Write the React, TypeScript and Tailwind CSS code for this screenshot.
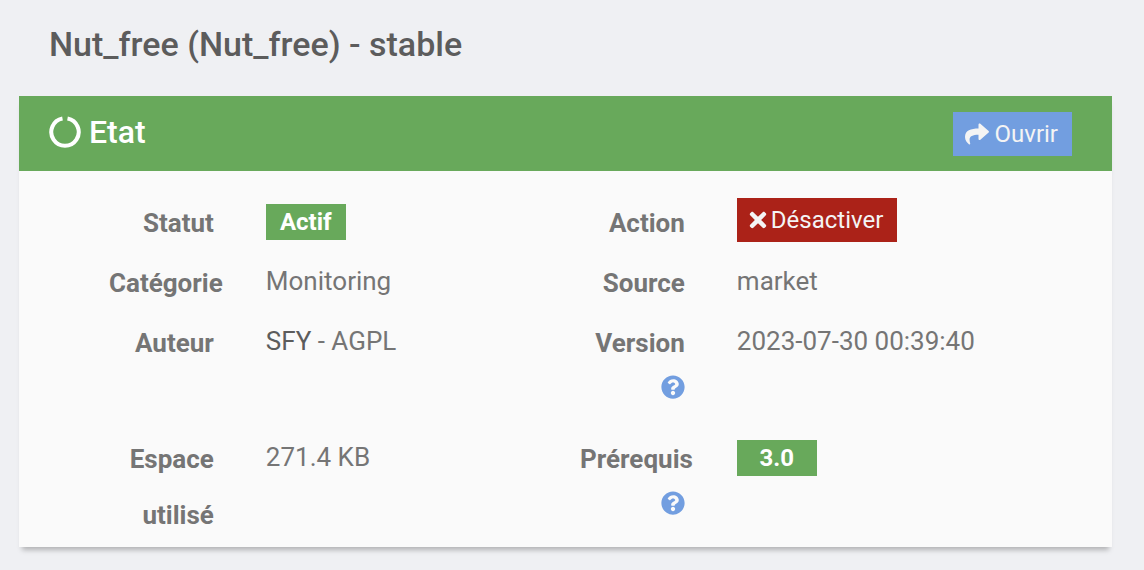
import type { ReactNode } from "react";
import { FaQuestionCircle, FaShare, FaTimes } from "react-icons/fa";

function StateIcon() {
  return (
    <svg viewBox="0 0 32 32" className="size-8" fill="none" stroke="currentColor" strokeWidth="4" strokeLinejoin="round" aria-hidden="true">
      <path d="M13.5 2.5A13.7 13.7 0 1 0 18.5 2.5" />
    </svg>
  );
}

function Label({ children, help }: { children: ReactNode; help?: string }) {
  return (
    <dt className="text-right text-[26px] leading-14 font-bold">
      {children}
      {help && (
        <span className="flex h-14 items-start justify-end pt-1">
          <FaQuestionCircle className="size-6 text-[#729ee0]" role="img" aria-label={help} />
        </span>
      )}
    </dt>
  );
}

function Value({ children }: { children: ReactNode }) {
  return <dd className="flex min-h-[52px] items-start text-[26px] leading-[52px] whitespace-pre">{children}</dd>;
}

function Badge({ children }: { children: ReactNode }) {
  return (
    <span className="mt-[9px] h-9 w-20 bg-[#68a95b] text-center text-2xl leading-9 font-bold text-white">
      {children}
    </span>
  );
}

export default function App() {
  return (
    <main className="min-h-screen bg-[#eff0f3] pt-6 pr-8 pb-6 pl-[19px] font-['Roboto',sans-serif] text-[#757575]">
      <h1 className="mb-8 px-[30px] text-[34px] leading-10 font-medium text-[#5c5c5c]">Nut_free (Nut_free) - stable</h1>
      <section className="bg-[#fafafa] shadow-[0_6px_5px_-3px_rgba(0,0,0,0.26)]">
        <header className="flex h-[75px] items-center justify-between bg-[#68a95b] pr-10 pl-[30px] text-white">
          <h2 className="flex items-center gap-2 pb-1 text-[32px] leading-9 font-medium">
            <StateIcon />
            Etat
          </h2>
          <button type="button" className="flex h-11 items-center gap-[6px] bg-[#729ee0] pr-3.5 pl-3 text-2xl text-[#f4f4f4]">
            <FaShare className="size-6" />
            Ouvrir
          </button>
        </header>
        <dl className="grid grid-cols-[minmax(0,2fr)_minmax(0,5fr)_minmax(0,2fr)_minmax(0,5fr)] gap-x-[52px] gap-y-1 pt-6 pr-[113px] pb-1 pl-[90px]">
          <Label>Statut</Label>
          <Value>
            <Badge>Actif</Badge>
          </Value>
          <Label>Action</Label>
          <Value>
            <button type="button" className="mt-[3px] flex h-11 items-center gap-1 bg-[#ab2218] pr-3.5 pl-3 text-2xl text-[#f4f4f4]">
              <FaTimes className="h-6 w-[18px]" />
              Désactiver
            </button>
          </Value>
          <Label>Catégorie</Label>
          <Value>Monitoring</Value>
          <Label>Source</Label>
          <Value>market</Value>
          <Label>Auteur</Label>
          <Value>
            <a href="#auteur" className="text-[#5c5c5c]">SFY</a> - AGPL
          </Value>
          <Label help="Version installée">Version</Label>
          <Value>2023-07-30 00:39:40</Value>
          <Label>Espace utilisé</Label>
          <Value>271.4 KB</Value>
          <Label help="Version minimale requise">Prérequis</Label>
          <Value>
            <Badge>3.0</Badge>
          </Value>
        </dl>
      </section>
    </main>
  );
}
